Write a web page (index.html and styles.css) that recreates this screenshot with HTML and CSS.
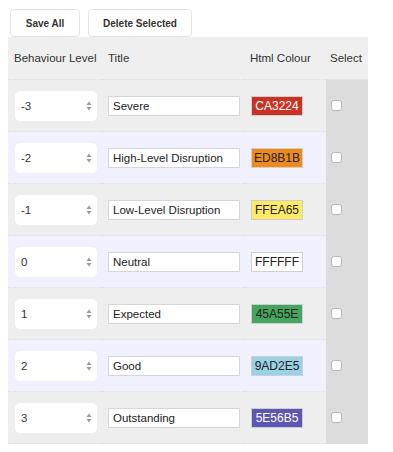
FILE: index.html
```html
<!DOCTYPE html>
<html>
<head>
<meta charset="utf-8">
<link rel="stylesheet" href="styles.css">
</head>
<body>
<div class="toolbar">
  <button class="btn btn-save">Save All</button>
  <button class="btn btn-delete">Delete Selected</button>
</div>
<table class="grid">
  <colgroup>
    <col class="c-level"><col class="c-title"><col class="c-colour"><col class="c-select">
  </colgroup>
  <thead>
    <tr class="head">
      <th>Behaviour Level</th><th>Title</th><th>Html Colour</th><th class="sel">Select</th>
    </tr>
  </thead>
  <tbody>
    <tr class="odd">
      <td><div class="spin"><span>-3</span><svg class="arrows" width="6" height="10" viewBox="0 0 6 10"><path d="M3 0.5 L5.5 4 H0.5 Z M3 9.5 L5.5 6 H0.5 Z" fill="#9a9a9a"/></svg></div></td>
      <td><input class="title" type="text" value="Severe"></td>
      <td><span class="swatch light-text" style="background:#CA3224">CA3224</span></td>
      <td class="sel"><span class="check"></span></td>
    </tr>
    <tr class="even">
      <td><div class="spin"><span>-2</span><svg class="arrows" width="6" height="10" viewBox="0 0 6 10"><path d="M3 0.5 L5.5 4 H0.5 Z M3 9.5 L5.5 6 H0.5 Z" fill="#9a9a9a"/></svg></div></td>
      <td><input class="title" type="text" value="High-Level Disruption"></td>
      <td><span class="swatch" style="background:#ED8B1B">ED8B1B</span></td>
      <td class="sel"><span class="check"></span></td>
    </tr>
    <tr class="odd">
      <td><div class="spin"><span>-1</span><svg class="arrows" width="6" height="10" viewBox="0 0 6 10"><path d="M3 0.5 L5.5 4 H0.5 Z M3 9.5 L5.5 6 H0.5 Z" fill="#9a9a9a"/></svg></div></td>
      <td><input class="title" type="text" value="Low-Level Disruption"></td>
      <td><span class="swatch" style="background:#FFEA65">FFEA65</span></td>
      <td class="sel"><span class="check"></span></td>
    </tr>
    <tr class="even">
      <td><div class="spin"><span>0</span><svg class="arrows" width="6" height="10" viewBox="0 0 6 10"><path d="M3 0.5 L5.5 4 H0.5 Z M3 9.5 L5.5 6 H0.5 Z" fill="#9a9a9a"/></svg></div></td>
      <td><input class="title" type="text" value="Neutral"></td>
      <td><span class="swatch" style="background:#FFFFFF">FFFFFF</span></td>
      <td class="sel"><span class="check"></span></td>
    </tr>
    <tr class="odd">
      <td><div class="spin"><span>1</span><svg class="arrows" width="6" height="10" viewBox="0 0 6 10"><path d="M3 0.5 L5.5 4 H0.5 Z M3 9.5 L5.5 6 H0.5 Z" fill="#9a9a9a"/></svg></div></td>
      <td><input class="title" type="text" value="Expected"></td>
      <td><span class="swatch" style="background:#45A55E">45A55E</span></td>
      <td class="sel"><span class="check"></span></td>
    </tr>
    <tr class="even">
      <td><div class="spin"><span>2</span><svg class="arrows" width="6" height="10" viewBox="0 0 6 10"><path d="M3 0.5 L5.5 4 H0.5 Z M3 9.5 L5.5 6 H0.5 Z" fill="#9a9a9a"/></svg></div></td>
      <td><input class="title" type="text" value="Good"></td>
      <td><span class="swatch" style="background:#9AD2E5">9AD2E5</span></td>
      <td class="sel"><span class="check"></span></td>
    </tr>
    <tr class="odd">
      <td><div class="spin"><span>3</span><svg class="arrows" width="6" height="10" viewBox="0 0 6 10"><path d="M3 0.5 L5.5 4 H0.5 Z M3 9.5 L5.5 6 H0.5 Z" fill="#9a9a9a"/></svg></div></td>
      <td><input class="title" type="text" value="Outstanding"></td>
      <td><span class="swatch light-text" style="background:#5E56B5">5E56B5</span></td>
      <td class="sel"><span class="check"></span></td>
    </tr>
  </tbody>
</table>
</body>
</html>
```
FILE: styles.css
```css
html, body {
  background: #ffffff;
}
body {
  margin: 8px;
  font-family: "Liberation Sans", Arial, Helvetica, sans-serif;
  color: #333333;
}
.toolbar {
  display: flex;
  gap: 8px;
  padding: 1px 0 0 2px;
  height: 28px;
}
.btn {
  height: 28px;
  margin: 0;
  padding: 0;
  background: #ffffff;
  border: 1px solid #e3e3e3;
  border-radius: 4px;
  font-family: "Liberation Sans", Arial, sans-serif;
  font-size: 10px;
  font-weight: bold;
  color: #333333;
}
.btn-save { width: 70px; }
.btn-delete { width: 104px; }

.grid {
  border-collapse: collapse;
  border-spacing: 0;
  width: 360px;
  table-layout: fixed;
}
.c-level { width: 94px; }
.c-title { width: 142px; }
.c-colour { width: 82px; }
.c-select { width: 42px; }

.grid th {
  height: 42px;
  padding: 0 0 0 6px;
  text-align: left;
  font-weight: normal;
  font-size: 11.5px;
  color: #333333;
  background: #efefef;
  border-bottom: 1px dotted #dedede;
  white-space: nowrap;
}
.grid th.sel { padding-left: 4px; background: #efefef; }

.grid td {
  height: 51px;
  padding: 0 0 0 6px;
  border-bottom: 1px dotted #dedede;
  vertical-align: middle;
}
.grid tr.odd td { background: #eeeeee; }
.grid tr.even td { background: #f1f0ff; }
.grid tr td.sel { background: #dcdcdc; padding-left: 5px; }

.spin {
  width: 82px;
  height: 30px;
  margin-left: 1px;
  box-sizing: border-box;
  background: #ffffff;
  border-radius: 5px;
  display: flex;
  align-items: center;
  justify-content: space-between;
  padding: 0 5px 0 6px;
  font-size: 11.5px;
  color: #333333;
}
.arrows { display: block; }

.title {
  box-sizing: border-box;
  width: 132px;
  height: 20px;
  margin: 0;
  padding: 0 4px;
  border: 1px solid #d6d6d6;
  background: #ffffff;
  font-family: "Liberation Sans", Arial, sans-serif;
  font-size: 11.5px;
  color: #222222;
  display: block;
}

.swatch {
  box-sizing: border-box;
  display: flex;
  align-items: center;
  justify-content: center;
  width: 52px;
  height: 20px;
  margin-left: 1px;
  border: 1px solid #cfcfcf;
  font-size: 12px;
  color: #222222;
}
.swatch.light-text { color: #ffffff; }

.check {
  display: block;
  box-sizing: border-box;
  width: 11px;
  height: 11px;
  background: #ffffff;
  border: 1px solid #b8b8b8;
  border-radius: 3px;
}
```
